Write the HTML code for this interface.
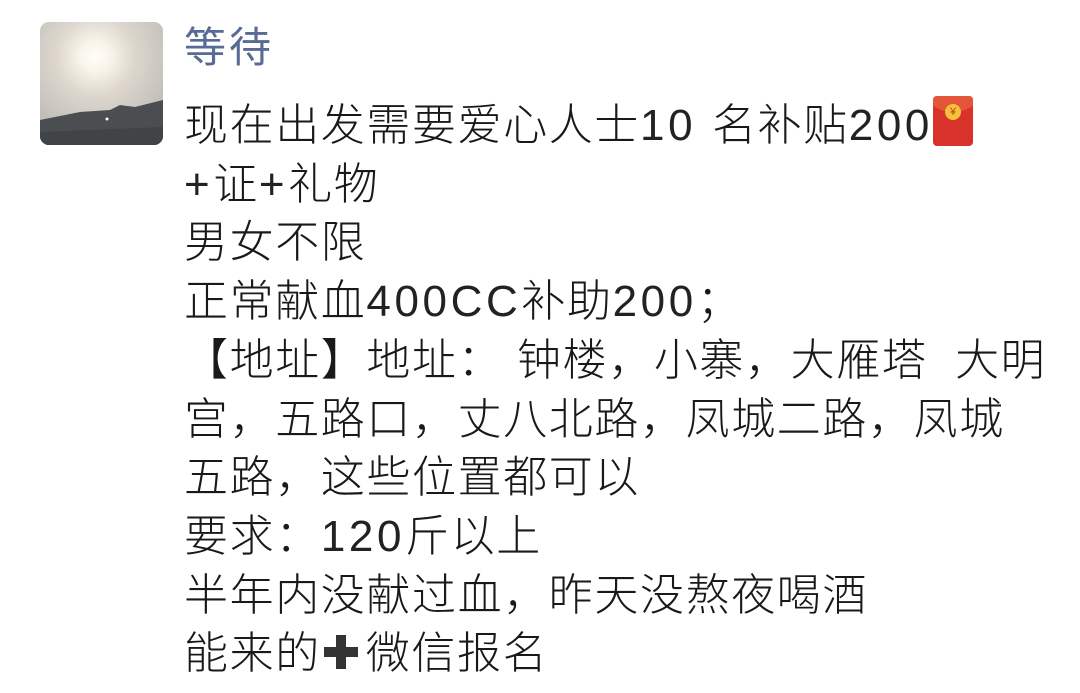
<!DOCTYPE html>
<html><head><meta charset="utf-8"><style>
body{margin:0;width:1080px;height:693px;background:#fff;overflow:hidden;font-family:"Liberation Sans","Noto Sans CJK SC",sans-serif;}
.av{position:absolute;left:40px;top:22px;width:123px;height:123px;border-radius:9px;overflow:hidden;
background:radial-gradient(circle at 45% 28%,#fffef8 0,#f8f4ea 14%,#ddd7ce 35%,#c2bfba 70%,#b5b4b2 100%);}
.name{position:absolute;left:184px;top:23px;font-size:42px;letter-spacing:3px;color:#576b95;line-height:50px;}
.txt{position:absolute;left:184px;top:96px;font-size:44px;letter-spacing:1.6px;color:#191919;line-height:58.7px;white-space:pre;font-weight:300}
.n{letter-spacing:3.6px;color:#222}
.env{display:inline-block;width:40px;height:50px;background:#d9322b;border-radius:4px;vertical-align:-6px;position:relative;margin-left:0;overflow:hidden}
.env:before{content:"";position:absolute;left:-6px;top:-20px;width:52px;height:36px;border-radius:50%;background:#e5553a}
.env:after{content:"¥";position:absolute;left:12px;top:8px;width:16px;height:16px;border-radius:50%;background:#f5c23a;color:#c0392b;font-size:11px;line-height:16px;text-align:center;letter-spacing:0}
.plus{display:inline-block;width:40px;height:40px;position:relative;vertical-align:-4px;margin-right:5px}
.plus:before{content:"";position:absolute;left:15px;top:3px;width:10px;height:34px;background:#333;}
.plus:after{content:"";position:absolute;left:3px;top:15px;width:34px;height:10px;background:#333;}
</style></head><body>
<div class="av"><svg width="123" height="123" style="position:absolute;left:0;top:0"><path d="M0 98 L40 90 L70 88 L80 83 L95 85 L123 78 L123 123 L0 123Z" fill="#4a4e50"/><path d="M0 110 L123 105 L123 123 L0 123Z" fill="#404446"/><circle cx="67" cy="97" r="1.5" fill="#fff"/></svg></div>
<div class="name">等待</div>
<div class="txt">现在出发需要爱心人士<span class="n">10 </span>名补贴<span class="n">200</span><span class="env"></span>
<span class="n">+</span>证<span class="n">+</span>礼物
男女不限
正常献血<span class="n">400CC</span>补助<span class="n">200</span>；
【地址】地址： 钟楼，小寨，大雁塔  大明
宫，五路口，丈八北路，凤城二路，凤城
五路，这些位置都可以
要求：<span class="n">120</span>斤以上
半年内没献过血，昨天没熬夜喝酒
能来的<span class="plus"></span>微信报名</div>
</body></html>
